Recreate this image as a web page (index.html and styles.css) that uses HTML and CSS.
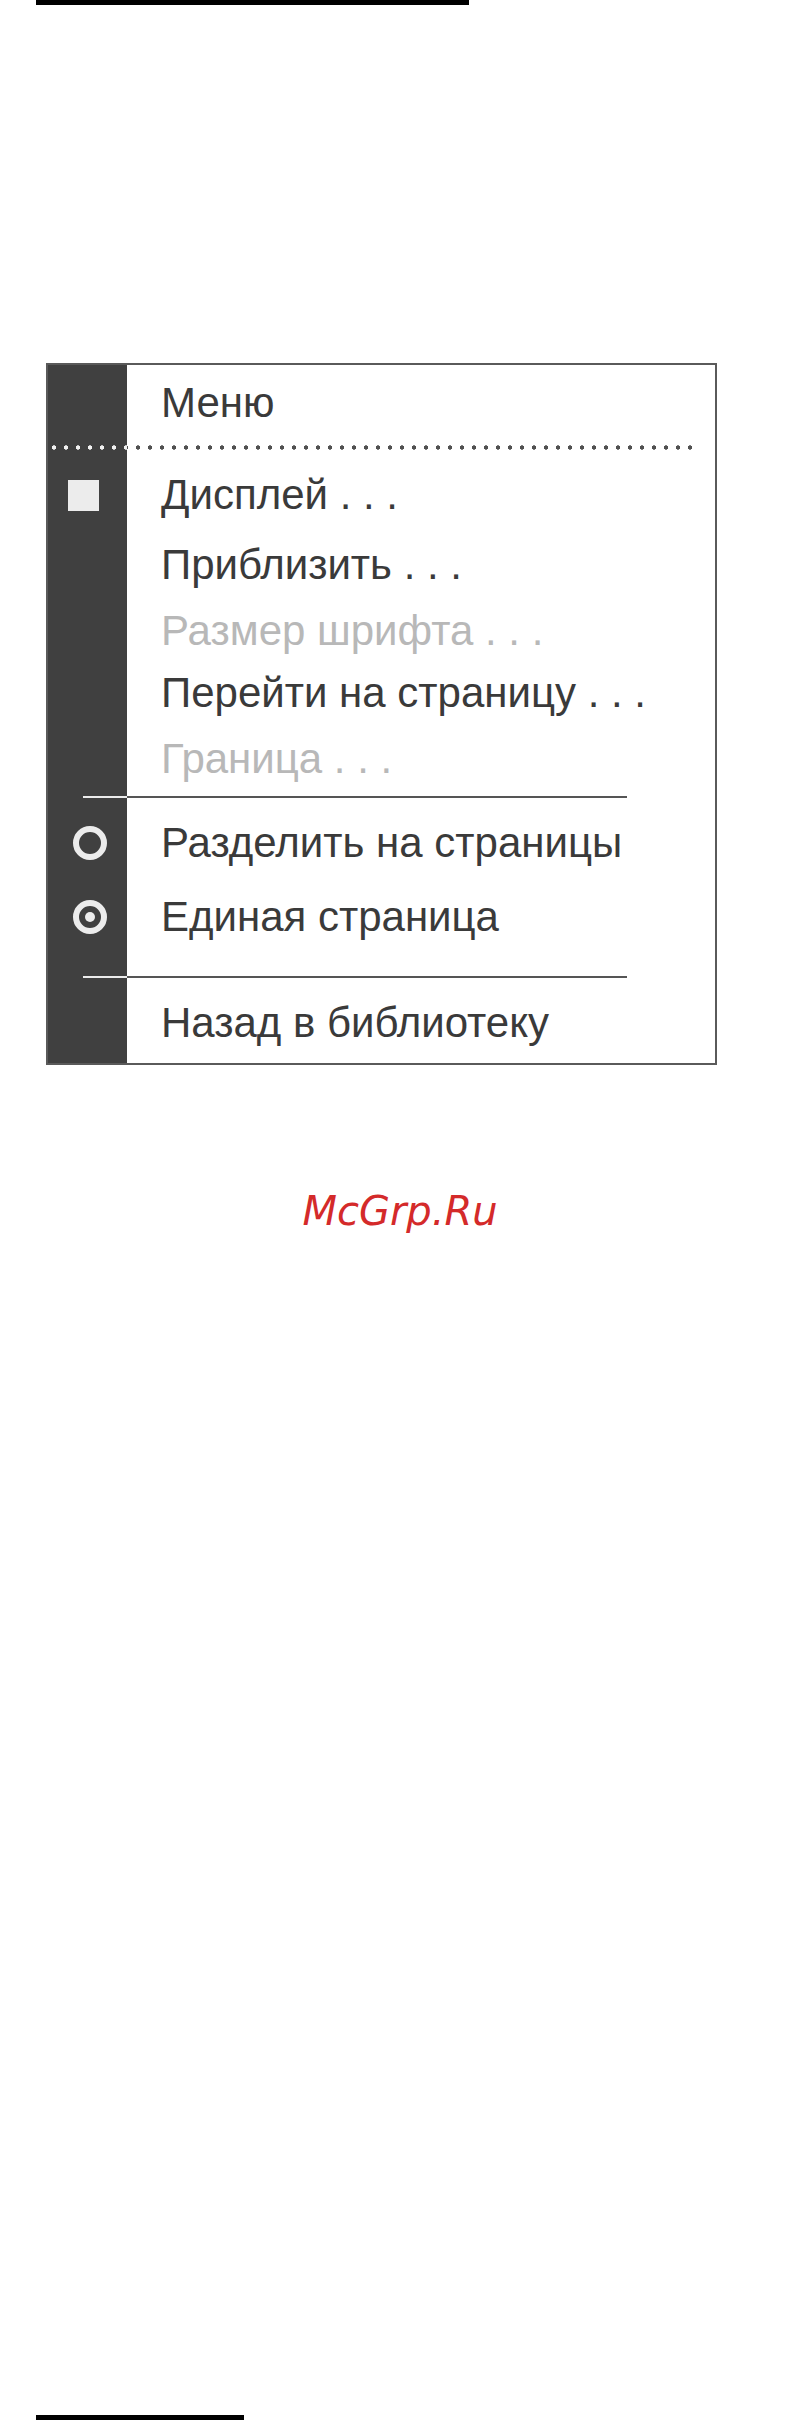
FILE: index.html
```html
<!DOCTYPE html>
<html lang="ru">
<head>
    <meta charset="UTF-8">
    <meta name="viewport" content="width=device-width, initial-scale=1.0">
    <title>Меню</title>
    <link rel="stylesheet" href="styles.css">
</head>
<body>
    <div class="page">
        <div class="bar bar-top"></div>

        <!-- Reader menu -->
        <div class="menu">
            <div class="row head">
                <span class="side"></span>
                <span class="label">Меню</span>
            </div>
            <div class="dots">
                <span class="dots-side"></span>
                <span class="dots-main"></span>
            </div>

            <ul class="group items">
                <li class="row">
                    <span class="side"><i class="check"></i></span>
                    <span class="label">Дисплей . . .</span>
                </li>
                <li class="row">
                    <span class="side"></span>
                    <span class="label">Приблизить . . .</span>
                </li>
                <li class="row disabled">
                    <span class="side"></span>
                    <span class="label">Размер шрифта . . .</span>
                </li>
                <li class="row">
                    <span class="side"></span>
                    <span class="label">Перейти на страницу . . .</span>
                </li>
                <li class="row disabled">
                    <span class="side"></span>
                    <span class="label">Граница . . .</span>
                </li>
            </ul>

            <div class="sep"><span class="sep-side"></span><span class="sep-main"></span></div>

            <ul class="group modes">
                <li class="row">
                    <span class="side"><i class="radio"></i></span>
                    <span class="label">Разделить на страницы</span>
                </li>
                <li class="row">
                    <span class="side"><i class="radio selected"></i></span>
                    <span class="label">Единая страница</span>
                </li>
            </ul>

            <div class="sep sep-last"><span class="sep-side"></span><span class="sep-main"></span></div>

            <ul class="group back">
                <li class="row">
                    <span class="side"></span>
                    <span class="label">Назад в библиотеку</span>
                </li>
            </ul>
        </div>

        <div class="watermark">McGrp.Ru</div>

        <div class="bar bar-bottom"></div>
    </div>
</body>
</html>
```

FILE: styles.css
```css
* {
    margin: 0;
    padding: 0;
    box-sizing: border-box;
}
body {
    background: #fff;
    font-family: 'Liberation Sans', Arial, sans-serif;
}
.page {
    width: 791px;
    height: 2420px;
    overflow: hidden;
}
.bar {
    background: #000;
    height: 5px;
    margin-left: 36px;
}
.bar-top {
    width: 433px;
}
.bar-bottom {
    width: 208px;
    margin-top: 1181px;
}
.menu {
    width: 671px;
    height: 702px;
    margin: 358px 0 0 46px;
    border: 2px solid #5a5a5a;
    background: linear-gradient(to right, #404040 79px, #fff 79px);
}
ul {
    list-style: none;
}
.row {
    display: flex;
    align-items: center;
    font-size: 42px;
    color: #3a3a3a;
}
.row.disabled {
    color: #b8b8b8;
}
.side {
    width: 79px;
    flex: none;
    display: flex;
    align-items: center;
}
.label {
    padding-left: 34px;
    white-space: nowrap;
}
.head {
    line-height: 75px;
}
.dots {
    display: flex;
    height: 5px;
    margin-top: 5px;
}
.dots-side, .dots-main {
    height: 5px;
    background-size: 12px 5px;
    background-repeat: repeat-x;
}
.dots-side {
    width: 79px;
    background-image: radial-gradient(circle, #f2f2f2 1.9px, transparent 2.5px);
}
.dots-main {
    width: 573px;
    background-position: 5px 0;
    background-image: radial-gradient(circle, #505050 1.9px, transparent 2.5px);
}
.items {
    margin-top: 12px;
    line-height: 66px;
}
.items .row:nth-child(2) {
    margin-top: 4px;
}
.items .row:nth-child(4) {
    margin-top: -4px;
}
.check {
    display: block;
    width: 31px;
    height: 31px;
    margin-left: 20px;
    background: #ececec;
}
.radio {
    display: flex;
    align-items: center;
    justify-content: center;
    width: 34px;
    height: 34px;
    margin-left: 25px;
    border: 6px solid #ececec;
    border-radius: 50%;
}
.radio.selected::after {
    content: '';
    width: 10px;
    height: 10px;
    border-radius: 50%;
    background: #ececec;
}
.sep {
    display: flex;
    height: 2px;
    margin-top: 4px;
}
.sep-side {
    width: 44px;
    margin-left: 35px;
    background: #ececec;
}
.sep-main {
    width: 500px;
    background: #555;
}
.modes {
    margin-top: 8px;
    line-height: 74px;
}
.sep-last {
    margin-top: 22px;
}
.back {
    padding-top: 4px;
    line-height: 81px;
}
.watermark {
    margin-top: 123px;
    padding-left: 9px;
    height: 46px;
    line-height: 46px;
    text-align: center;
    font-family: 'DejaVu Sans', Verdana, sans-serif;
    font-style: italic;
    font-size: 40px;
    color: #d42a2a;
}
```
